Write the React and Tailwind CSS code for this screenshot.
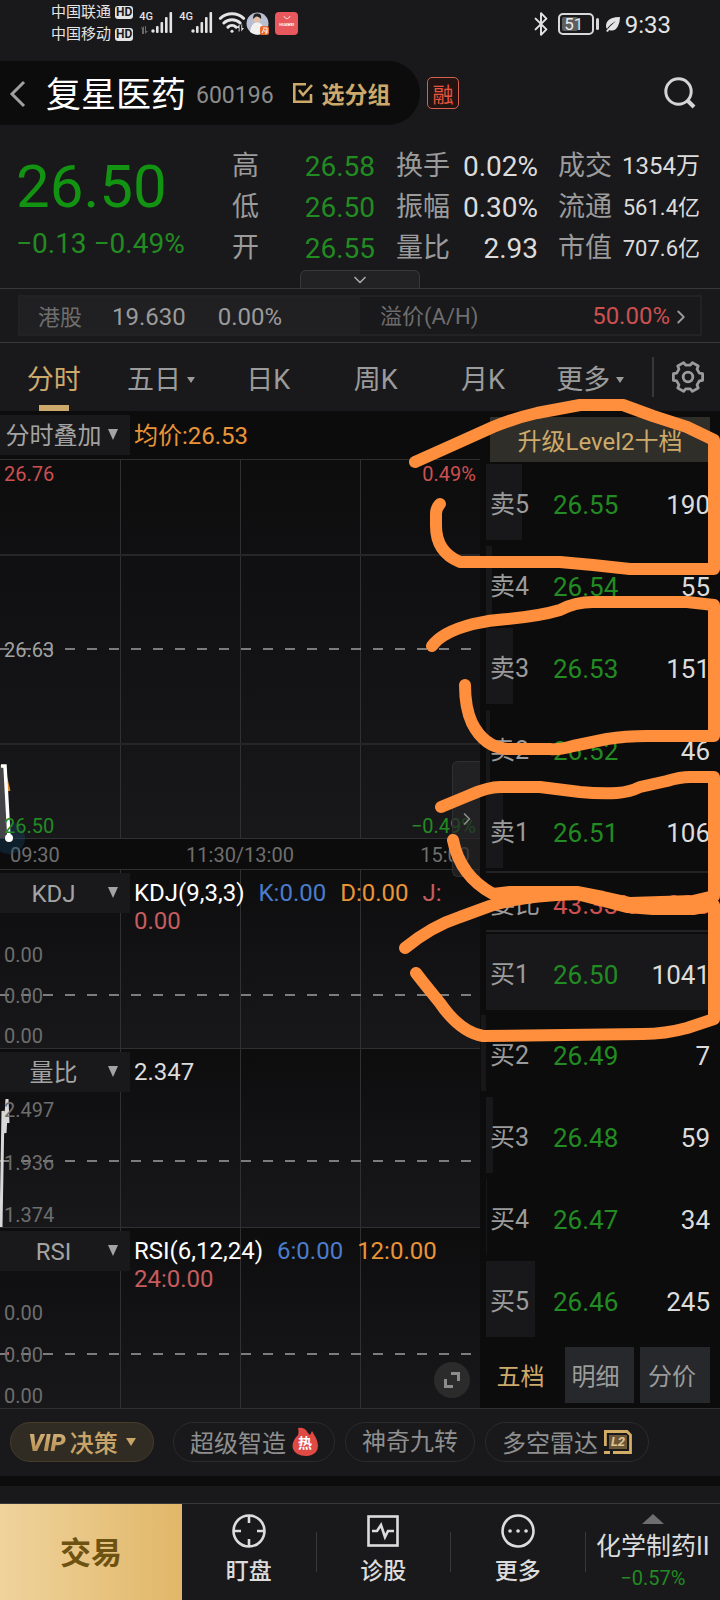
import { Bluetooth, ChevronDown, ChevronRight, Wifi } from 'lucide-react'

const QUOTE_ROWS = [
  ['高', '26.58', '换手', '0.02%', '成交', '1354万', 'text-[24px]'],
  ['低', '26.50', '振幅', '0.30%', '流通', '561.4亿', 'text-[22px]'],
  ['开', '26.55', '量比', '2.93', '市值', '707.6亿', 'text-[22px]'],
]

const PERIODS = [
  { label: '分时', active: true },
  { label: '五日', menu: true },
  { label: '日K' },
  { label: '周K' },
  { label: '月K' },
  { label: '更多', menu: true },
]

// depth is the width of the volume bar behind a row, in pixels
const SELLS = [
  { label: '卖5', price: '26.55', qty: '190', depth: 36 },
  { label: '卖4', price: '26.54', qty: '55', depth: 6 },
  { label: '卖3', price: '26.53', qty: '151', depth: 27 },
  { label: '卖2', price: '26.52', qty: '46', depth: 4 },
  { label: '卖1', price: '26.51', qty: '106', depth: 17 },
]

const BUYS = [
  { label: '买1', price: '26.50', qty: '1041', depth: 223 },
  { label: '买2', price: '26.49', qty: '7', depth: 0 },
  { label: '买3', price: '26.48', qty: '59', depth: 7 },
  { label: '买4', price: '26.47', qty: '34', depth: 1 },
  { label: '买5', price: '26.46', qty: '245', depth: 49 },
]

const MARKS = [
  'M415 462 L453 445 L493 427 Q515 418 537 413 L580 405 H623 L653 416 L687 427 L714 440 V569 H630 L593 565 L560 562 H460 Q436 552 436 526 V514 Q436 508 440 504',
  'M432 646 Q442 632 473 624 Q490 620 507 619 Q540 616 560 610 Q575 602 593 602 H687 L714 605 V736 H647 Q625 736 607 739 L573 746 Q560 750 550 749 H507 Q484 747 472 723 Q465 708 465 685',
  'M441 807 L470 795 Q488 787 500 787 H540 L580 792 Q600 794 617 793 Q630 792 640 787 L667 781 Q680 777 690 777 H714 V896 L693 901 L630 903 L603 897 L577 892 H510 L493 894 Q460 876 453 840',
  'M405 948 Q432 926 460 917 L490 906 Q520 896 577 894 L600 900 L627 907 L653 909 H693 L714 905 V1019 L687 1028 Q665 1034 643 1034 L483 1036 Q460 1032 440 1003 L423 982 L416 973',
]

const GEAR_POINTS = Array.from({ length: 6 }, (_, i) => {
  const base = i * 60
  return [[-19, 12], [-13, 15], [13, 15], [19, 12]].map(([offset, r]) => {
    const a = ((base + offset) * Math.PI) / 180
    return `${(17 + r * Math.cos(a)).toFixed(2)},${(17 + r * Math.sin(a)).toFixed(2)}`
  })
}).flat().join(' ')

function Caret({ className }) {
  return (
    <svg viewBox="0 0 10 10" preserveAspectRatio="none" className={className} aria-hidden="true">
      <path d="M0 0H10L5 10Z" fill="currentColor" />
    </svg>
  )
}

function Signal({ data }) {
  return (
    <div className="flex">
      <span className="w-3 text-[11px] leading-[10px] font-medium">
        4G
        <svg viewBox="0 0 10 8" className="mt-1 h-2 w-[10px]" fill="#6a6a6a" aria-hidden="true">
          {data && <path d="M3 0V8H5V0L2 3ZM6 0V8L9 5H7V0Z" />}
        </svg>
      </span>
      <svg viewBox="0 0 22 21" className="h-[21px] w-[22px]" fill="currentColor" aria-hidden="true">
        <circle cx="2" cy="19" r="1.7" />
        <rect x="5" y="14" width="2.6" height="7" rx="1" />
        <rect x="9.5" y="10" width="2.6" height="11" rx="1" />
        <rect x="14" y="5" width="2.6" height="16" rx="1" />
        <rect x="18.5" y="0" width="2.6" height="21" rx="1" />
      </svg>
    </div>
  )
}

function StatusBar() {
  return (
    <div className="flex h-[61px] items-start justify-between pr-[49px] pl-[51px] text-[#e4e4e4]">
      <div className="flex">
        <div className="pt-px text-[15px] leading-[22px]">
          {['中国联通', '中国移动'].map((name) => (
            <div key={name} className="flex items-center gap-1">
              {name}
              <span className="rounded-[3px] bg-[#e4e4e4] px-px text-[12px] leading-[13px] font-bold text-[#19191b]">HD</span>
            </div>
          ))}
        </div>
        <div className="flex gap-1.5 pt-3 pl-1.5">
          <Signal data />
          <Signal />
          <div className="relative h-6 w-[25px]">
            <Wifi size={28} strokeWidth={2.6} className="-mt-1 -ml-px" />
            <svg viewBox="0 0 9 8" className="absolute right-0 bottom-1 h-2 w-2" fill="currentColor" aria-hidden="true">
              <path d="M3 0V8H4V0L0 4H3ZM6 0V8L9 4H7V0Z" />
            </svg>
          </div>
          <svg viewBox="0 0 23 23" className="-ml-1 size-[23px]" aria-hidden="true">
            <circle cx="11.5" cy="11.5" r="11" fill="#b9bfd2" />
            <path d="M4 20Q5 11 11 10Q18 11 18 21Q11 25 4 20Z" fill="#f3f1f0" />
            <circle cx="11" cy="7" r="3.5" fill="#e5bfa8" />
            <path d="M7 7Q7 1 11 1.5Q16 1 15 7Q13 4 10 4.5Z" fill="#222" />
            <rect x="14" y="14" width="9" height="9" rx="2" fill="#e8692c" />
            <path d="M16 21L18 17M17 16H21V19H18M21 19V21H19" stroke="#fff" fill="none" />
          </svg>
          <div className="flex size-[23px] flex-col items-center rounded-[4px] bg-[#e8585c] text-white">
            <svg viewBox="0 0 10 5" className="mt-1 h-1 w-2" fill="none" stroke="currentColor" aria-hidden="true">
              <path d="M1 0Q5 7 9 0" />
            </svg>
            <span className="mt-0.5 text-[4px] leading-[6px] font-bold">HUAWEI</span>
          </div>
        </div>
      </div>
      <div className="flex items-center pt-2">
        <Bluetooth size={26} strokeWidth={1.8} />
        <div className="ml-1 flex items-center">
          <div className="relative h-[22px] w-9 rounded-[5px] border-2 border-[#d8d8d8] pr-1 text-center text-[17px] leading-[18px]">
            <div className="absolute inset-y-0.5 left-0.5 w-4 rounded-[2px] bg-white/30" />
            51
          </div>
          <div className="ml-0.5 h-3 w-[3px] rounded bg-[#d8d8d8]" />
        </div>
        <svg viewBox="0 0 16 16" className="ml-1.5 size-4" fill="currentColor" aria-hidden="true">
          <path d="M15 1Q5 1 2 6Q0 10 2 13Q5 8 11 5Q5 10 1 15L3 16L4 14Q10 16 13 10Q15 6 15 1Z" />
        </svg>
        <span className="ml-1 pt-0.5 text-[24px] leading-[30px]">9:33</span>
      </div>
    </div>
  )
}

function Header() {
  return (
    <header className="flex items-center">
      <div className="flex h-16 w-[420px] items-center rounded-r-full bg-[#0c0c0c]">
        <button aria-label="返回" className="ml-1 text-[#a0a0a0]">
          <svg viewBox="0 0 26 32" className="h-8 w-[26px]" fill="none" stroke="currentColor" strokeWidth="3" aria-hidden="true">
            <path d="M20 5L8 17L20 29" />
          </svg>
        </button>
        <h1 className="ml-4 pt-1.5 text-[35px] leading-[48px] text-white">复星医药</h1>
        <span className="ml-2.5 pt-1.5 text-[23px] leading-8 text-[#8c8c8c]">600196</span>
        <button className="ml-[18px] flex items-center gap-2 text-[23px] leading-8 font-bold text-[#cdaa6b]">
          <svg viewBox="0 0 22 22" className="size-[22px]" fill="none" stroke="currentColor" strokeWidth="2.6" aria-hidden="true">
            <path d="M14 2.3H2.3V19.7H19V12M7 8L11 13L20 3" />
          </svg>
          <span className="pt-1.5">选分组</span>
        </button>
      </div>
      <span className="ml-[7px] flex size-8 items-center justify-center rounded-[5px] border border-[#d5604c] bg-[#231414] pt-1 text-[21px] leading-[30px] text-[#e8553c]">融</span>
      <button aria-label="搜索" className="mr-6 ml-auto text-[#d4d4d4]">
        <svg viewBox="0 0 32 32" className="size-8" fill="none" stroke="currentColor" strokeWidth="3" aria-hidden="true">
          <circle cx="14.5" cy="14.5" r="12.7" />
          <path d="M23.5 23.5L30 30" strokeWidth="4" />
        </svg>
      </button>
    </header>
  )
}

function Quote() {
  return (
    <section className="relative flex h-[164px] border-b border-[#38383a]">
      <div className="w-[232px] pt-[26px] pl-4 text-[#129412]">
        <div className="text-[60px] leading-[72px]">26.50</div>
        <div className="mt-1 text-[28px] leading-[34px] whitespace-nowrap text-[#228b22]">−0.13 −0.49%</div>
      </div>
      <dl className="flex-1 pt-[21px] pr-5 text-[27px] leading-[41px] text-[#9b9b9b]">
        {QUOTE_ROWS.map(([a, av, b, bv, c, cv, size]) => (
          <div key={a} className="flex items-center">
            <dt className="w-[27px]">{a}</dt>
            <dd className="flex-1 text-right text-[28px] text-[#228b22]">{av}</dd>
            <dt className="ml-[21px] w-[54px]">{b}</dt>
            <dd className="w-[88px] text-right text-[28px] text-[#dcdcdc]">{bv}</dd>
            <dt className="ml-5 w-[54px]">{c}</dt>
            <dd className={`w-[88px] text-right text-[#dcdcdc] ${size}`}>{cv}</dd>
          </div>
        ))}
      </dl>
      <button aria-label="展开" className="absolute bottom-0 left-1/2 flex h-[18px] w-[120px] -translate-x-1/2 items-center justify-center rounded-t-[6px] border border-b-0 border-[#38383a] bg-[#222224] text-[#a8a8a8]">
        <ChevronDown size={20} strokeWidth={2} />
      </button>
    </section>
  )
}

function HkBar() {
  return (
    <div className="border-b border-[#38383a] px-[18px] py-1.5">
      <a href="#hk" className="flex h-[41px] items-stretch border-2 border-[#222224] text-[24px] leading-[37px] text-[#9b9b9b]">
        <span className="flex w-1/2 bg-[#202022] pt-0.5 pl-[18px]">
          <span className="text-[22px] text-[#6e6e6e]">港股</span>
          <span className="ml-[30px]">19.630</span>
          <span className="ml-8">0.00%</span>
        </span>
        <span className="flex w-1/2 items-center pt-0.5 pr-2 pl-5">
          <span className="text-[22px] text-[#6e6e6e]">溢价(A/H)</span>
          <span className="ml-auto text-[#cc5050]">50.00%</span>
          <ChevronRight size={22} />
        </span>
      </a>
    </div>
  )
}

function PeriodTabs() {
  return (
    <nav className="flex h-[68px] items-center text-[27px] leading-9 text-[#9b9b9b]">
      <div className="flex h-full flex-1">
        {PERIODS.map(({ label, active, menu }) => (
          <button key={label} className={`relative flex flex-1 items-center justify-center gap-1.5 pt-1.5 ${active ? 'text-[#cdaa6b]' : ''}`}>
            {label}
            {menu && <Caret className="h-1.5 w-2" />}
            {active && <span className="absolute bottom-0 h-1.5 w-[30px] bg-[#cdaa6b]" />}
          </button>
        ))}
      </div>
      <span className="ml-2 h-10 w-0.5 bg-[#38383a]" />
      <button aria-label="设置" className="mr-[15px] ml-[17px]">
        <svg viewBox="0 0 34 34" className="size-[34px]" fill="none" stroke="currentColor" strokeWidth="2.8" strokeLinejoin="round" aria-hidden="true">
          <polygon points={GEAR_POINTS} />
          <circle cx="17" cy="17" r="4.8" />
        </svg>
      </button>
    </nav>
  )
}

function IndicatorSelect({ name, label }) {
  return (
    <div className="relative w-[130px] shrink-0">
      <select aria-label={label} className="h-10 w-full appearance-none bg-[#19191b] pt-0.5 pr-[23px] text-center text-[24px] text-[#a3a3a3]">
        <option>{name}</option>
      </select>
      <Caret className="pointer-events-none absolute top-3.5 right-3 h-[11px] w-2.5 text-[#a3a3a3]" />
    </div>
  )
}

function Grid({ dashY, rows = [], children }) {
  return (
    <svg className="absolute inset-0 h-full w-full overflow-visible" stroke="#303033" strokeWidth="1" shapeRendering="crispEdges" aria-hidden="true">
      {['25%', '50%', '75%'].map((x) => <line key={x} x1={x} x2={x} y1="0" y2="100%" />)}
      {rows.map((y) => <line key={y} x1="0" x2="100%" y1={y} y2={y} strokeWidth="2" stroke="#262628" />)}
      <line x1="-1" x2="99%" y1={dashY} y2={dashY} stroke="#7c7c7c" strokeWidth="2" strokeDasharray="10 12" />
      {children}
    </svg>
  )
}

function PriceChart() {
  return (
    <div className="relative">
      <div className="flex items-center pt-1 pb-1">
        <IndicatorSelect name="分时叠加" label="叠加" />
        <span className="pt-0.5 pl-1 text-[24px] leading-8 text-[#ea9437]">均价:26.53</span>
      </div>
      <div className="relative h-[380px] border-y border-[#303033] bg-linear-to-b from-[#0d0d0e] to-[#18181b]">
        <Grid dashY="50%" rows={['25%', '75%']}>
          <g shapeRendering="auto" fill="none">
            <circle cx="9" cy="378" r="16" fill="#18507a" fillOpacity="0.3" stroke="none" />
            <path d="M0 306L4 310L9 331" stroke="#e08a30" strokeWidth="3" />
            <path d="M0 306H4L9 378H0Z" fill="#444448" stroke="none" />
            <path d="M1 306H5L9 378" stroke="#fff" strokeWidth="3.5" />
            <circle cx="9" cy="378" r="4" fill="#fff" stroke="none" />
          </g>
        </Grid>
        <div className="relative flex h-full flex-col justify-between px-1 pt-0.5 text-[20px] leading-6">
          <div className="flex justify-between text-[#cc5050]"><span>26.76</span><span>0.49%</span></div>
          <span className="text-[#a3a3a3]">26.63</span>
          <div className="flex justify-between text-[#228b22]"><span>26.50</span><span>−0.49%</span></div>
        </div>
      </div>
      <div className="flex h-[30px] items-center justify-between px-2.5 pt-0.5 text-[20px] leading-6 text-[#6e6e6e]">
        <span>09:30</span><span>11:30/13:00</span><span>15:00</span>
      </div>
      <button aria-label="收起盘口" className="absolute right-0 -bottom-2 z-10 flex h-[116px] w-7 items-center justify-center rounded-l-[6px] border border-r-0 border-[#303033] bg-[#262628]/70 text-[#8c8c8c]">
        <ChevronRight size={20} />
      </button>
    </div>
  )
}

function Indicator({ name, values, scale, dashY, labelPad, children }) {
  return (
    <div className="relative flex h-[179px] flex-col border-t border-[#303033] bg-linear-to-b from-[#0d0d0e] to-[#18181b] last-of-type:h-[181px]">
      <Grid dashY={dashY}>{children}</Grid>
      <div className="relative flex h-11 pt-[3px]">
        <IndicatorSelect name={name} label={`指标 ${name}`} />
        <div className="pt-1.5 pl-1 text-[24px] leading-7 whitespace-nowrap">{values}</div>
      </div>
      <div className={`relative flex flex-1 flex-col justify-between pb-px pl-1 text-[20px] leading-[22px] text-[#6e6e6e] ${labelPad}`}>
        {scale.map((v, i) => <span key={i}>{v}</span>)}
      </div>
    </div>
  )
}

function Charts() {
  return (
    <div className="relative w-2/3">
      <PriceChart />
      <Indicator
        name="KDJ"
        dashY="70%"
        labelPad="pt-[30px]"
        scale={['0.00', '0.00', '0.00']}
        values={
          <>
            <div className="flex gap-3.5">
              <span className="text-white">KDJ(9,3,3)</span>
              <span className="text-[#4a7ccb]">K:0.00</span>
              <span className="text-[#ea9437]">D:0.00</span>
              <span className="text-[#c65c5c]">J:</span>
            </div>
            <div className="text-[#c65c5c]">0.00</div>
          </>
        }
      />
      <Indicator
        name="量比"
        dashY="63%"
        labelPad="pt-1.5"
        scale={['2.497', '1.936', '1.374']}
        values={<span className="text-[#dcdcdc]">2.347</span>}
      >
        <path d="M1 178L3 62L5 84L7 50L8 74" fill="none" stroke="#d8d8d8" strokeWidth="3" shapeRendering="auto" />
      </Indicator>
      <Indicator
        name="RSI"
        dashY="70%"
        labelPad="pt-[30px]"
        scale={['0.00', '0.00', '0.00']}
        values={
          <>
            <div className="flex gap-3.5">
              <span className="text-white">RSI(6,12,24)</span>
              <span className="text-[#4a7ccb]">6:0.00</span>
              <span className="text-[#ea9437]">12:0.00</span>
            </div>
            <div className="text-[#c65c5c]">24:0.00</div>
          </>
        }
      >
        <rect x="6" y="124" width="3" height="3" fill="#c65c5c" stroke="none" />
      </Indicator>
      <button aria-label="全屏" className="absolute right-2.5 bottom-2.5 flex size-9 items-center justify-center rounded-full bg-[#2b2b2b] text-[#8c8c8c]">
        <svg viewBox="0 0 16 16" className="size-4" fill="none" stroke="currentColor" strokeWidth="3" aria-hidden="true">
          <path d="M7 1.5H14.5V9M1.5 7V14.5H9" />
        </svg>
      </button>
    </div>
  )
}

function OrderRows({ rows }) {
  return rows.map(({ label, price, qty, depth }) => (
    <tr key={label} className="h-[82px]">
      <td className="relative w-[63px] pt-1 pl-1 text-[25px] text-[#9b9b9b]">
        <span
          className={`absolute top-0.5 h-[76px] bg-[#18181b] ${depth ? 'left-0' : '-left-[5px]'}`}
          style={{ width: depth || 5 }}
        />
        <span className="relative">{label}</span>
      </td>
      <td className="relative pt-1 pl-1 text-[#228b22]">{price}</td>
      <td className="relative pt-1 text-right text-[#dcdcdc]">{qty}</td>
    </tr>
  ))
}

function OrderBook() {
  return (
    <aside className="w-1/3 pt-1.5 pr-2.5 pl-1.5">
      <button className="ml-1 block h-[45px] w-[220px] bg-[#302e29] pt-1 text-[24px] text-[#cdaa6b]">升级Level2十档</button>
      <table className="w-full border-collapse text-[26px] leading-8">
        <tbody>
          <OrderRows rows={SELLS} />
        </tbody>
        <tbody className="border-y-2 border-[#222224]">
          <tr className="h-[59px]">
            <td className="pt-1.5 pl-1 text-[25px] whitespace-nowrap text-[#9b9b9b]">委比</td>
            <td className="pt-1.5 pl-1 text-[#cc5050]">43.33%</td>
            <td className="pt-1.5 text-right text-[#cc5050]">838</td>
          </tr>
        </tbody>
        <tbody>
          <OrderRows rows={BUYS} />
        </tbody>
      </table>
      <div className="mt-1.5 flex h-14 gap-1.5 text-[24px] text-[#9b9b9b]">
        <button className="flex-1 pt-1 pr-1 text-[#cdaa6b]">五档</button>
        <button className="w-[69px] bg-[#27282b] pt-1 pr-2">明细</button>
        <button className="w-[70px] bg-[#27282b] pt-1 pr-1.5">分价</button>
      </div>
    </aside>
  )
}

function Pills() {
  return (
    <div className="flex items-center gap-2.5 border-t border-[#303033] px-2.5 pt-[13px] pb-3.5 text-[24px] leading-[38px] whitespace-nowrap text-[#8f8f8f]">
      <button className="mr-[9px] flex h-10 w-36 items-center justify-center rounded-full border border-[#453c2b] bg-[#312c23] font-medium text-[#c9a468]">
        <span className="mr-0.5 bg-linear-to-b from-[#e2c48e] to-[#a87f3e] bg-clip-text pt-0.5 pr-0.5 font-black text-transparent italic">VIP</span>
        <span className="pt-1">决策</span>
        <Caret className="ml-2 h-2 w-2.5" />
      </button>
      <button className="flex h-10 items-center rounded-full border border-[#2b2b2d] px-4">
        <span className="pt-1">超级智造</span>
        <span className="relative ml-1.5 flex h-[30px] w-[26px] items-center justify-center">
          <svg viewBox="0 0 26 30" className="absolute inset-0 h-full w-full" aria-hidden="true">
            <path d="M6 1Q13 0 16 6L18 8L20 4L24 11Q28 20 24 25Q20 29 14 29Q4 29 1 22Q-1 15 6 8Q7 5 6 1Z" fill="#e04a45" />
          </svg>
          <span className="relative pt-0.5 text-[14px] leading-4 font-bold text-white">热</span>
        </span>
      </button>
      <button className="h-10 rounded-full border border-[#2b2b2d] px-4">神奇九转</button>
      <button className="flex h-10 items-center rounded-full border border-[#2b2b2d] px-4">
        <span className="pt-1">多空雷达</span>
        <span className="relative ml-1.5 flex h-6 w-7 items-center justify-center">
          <svg viewBox="0 0 28 24" className="absolute inset-0 h-full w-full" fill="none" stroke="#d3ac66" strokeWidth="2.8" aria-hidden="true">
            <path d="M1.4 16V1.5H23L26.5 5V22.5H9M0 22.5H6" />
            <rect x="5" y="5" width="18" height="14" fill="#6a573a" stroke="none" />
          </svg>
          <span className="relative text-[13px] leading-3 font-bold text-[#e2c48e] italic">L2</span>
        </span>
      </button>
    </div>
  )
}

function BottomNav() {
  const items = [
    { label: '盯盘', icon: <><circle cx="17" cy="17" r="15.5" /><path d="M17 2V9M17 25V32M2 17H9M25 17H32" /></> },
    { label: '诊股', icon: <><rect x="2.5" y="2.5" width="29" height="29" /><path d="M6 17H11L15 11L19 23L22 17H28" /></> },
    { label: '更多', icon: <><circle cx="17" cy="17" r="15.5" /><path d="M9 17H9.1M17 17H17.1M25 17H25.1" strokeWidth="3.6" strokeLinecap="round" /></> },
  ]
  return (
    <nav className="flex h-[97px] border-t border-[#38383a] text-[#dcdcdc]">
      <button className="w-[182px] bg-linear-to-r from-[#efd39c] to-[#e1b768] pt-1 text-[31px] font-bold text-[#6e5212]">交易</button>
      {items.map(({ label, icon }) => (
        <div key={label} className="flex flex-1 items-center">
          <button className="flex h-full flex-1 flex-col items-center pt-2.5 text-[23px] leading-8 font-medium">
            <svg viewBox="0 0 34 34" className="mb-2 size-[34px]" fill="none" stroke="currentColor" strokeWidth="2.6" aria-hidden="true">{icon}</svg>
            {label}
          </button>
          <span className="h-10 w-px bg-[#38383a]" />
        </div>
      ))}
      <a href="#sector" className="flex flex-1 flex-col items-center pt-2.5 whitespace-nowrap">
        <svg viewBox="0 0 22 10" className="h-2.5 w-[22px]" fill="#6e6e6e" aria-hidden="true"><path d="M0 10L11 0L22 10Z" /></svg>
        <span className="mt-1.5 text-[25px] leading-[34px]">化学制药II</span>
        <span className="mt-0.5 text-[20px] leading-6 text-[#228b22]">−0.57%</span>
      </a>
    </nav>
  )
}

export default function App() {
  return (
    <div className="min-h-screen bg-[#19191b] font-[Roboto,'Noto_Sans_CJK_SC',sans-serif]">
      <StatusBar />
      <Header />
      <Quote />
      <HkBar />
      <PeriodTabs />
      <main className="relative flex bg-[#0c0c0c]">
        <Charts />
        <OrderBook />
        <svg viewBox="390 391 330 660" className="pointer-events-none absolute -top-5 right-0 z-20 h-[660px] w-[330px]" fill="none" stroke="#ff8f3c" strokeWidth="12" strokeLinecap="round" strokeLinejoin="round" aria-hidden="true">
          {MARKS.map((d) => <path key={d} d={d} />)}
        </svg>
      </main>
      <Pills />
      <div className="mb-[17px] h-2.5 bg-[#0c0c0c]" />
      <BottomNav />
    </div>
  )
}
